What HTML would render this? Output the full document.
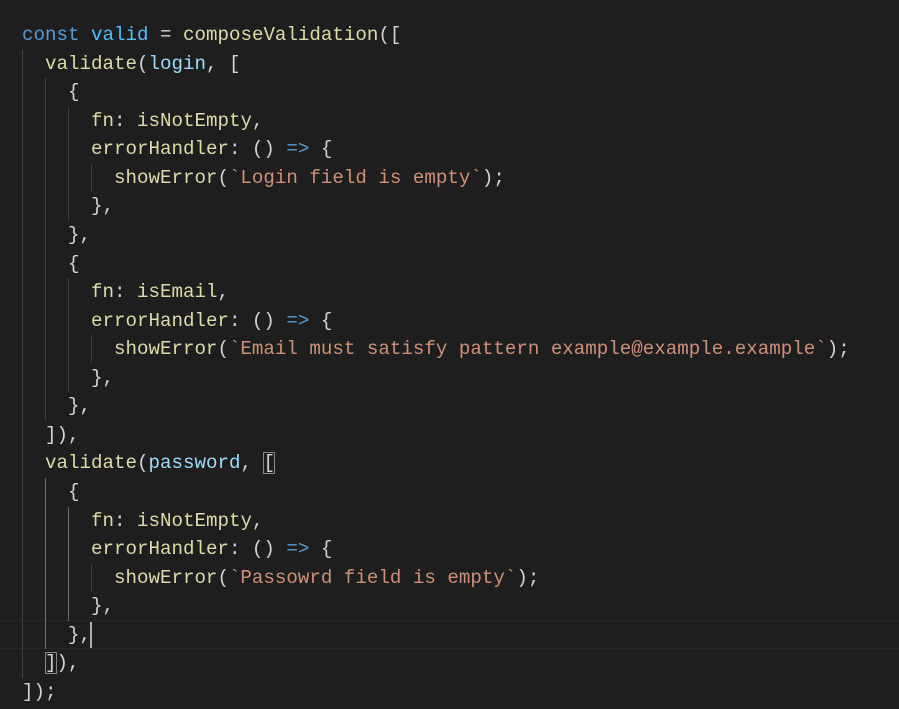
<!DOCTYPE html>
<html><head><meta charset="utf-8"><style>
html,body{margin:0;padding:0;background:#1e1e1e;width:899px;height:709px;overflow:hidden}
pre{position:absolute;left:22px;top:21px;margin:0;font-family:"Liberation Mono",monospace;font-size:19.17px;line-height:28.56px;color:#d4d4d4;}
.k{color:#569cd6}.c{color:#4fc1ff}.f{color:#dcdcaa}.v{color:#9cdcfe}.s{color:#ce9178}
.g{position:absolute;width:1px;background:#404040}
.ga{background:#707070}
.hl{position:absolute;left:0;width:899px;top:620px;height:27px;border-top:1px solid #282828;border-bottom:1px solid #282828}
.bm{outline:1px solid #888;outline-offset:-1px}
.cur{position:absolute;left:90px;top:622px;width:2px;height:26px;background:#aeafad}
</style></head><body>
<div class="hl"></div>
<div class="g" style="left:22px;top:50px;height:628px"></div>
<div class="g" style="left:45px;top:78px;height:343px"></div>
<div class="g ga" style="left:45px;top:478px;height:171px"></div>
<div class="g" style="left:68px;top:107px;height:114px"></div>
<div class="g" style="left:68px;top:278px;height:114px"></div>
<div class="g ga" style="left:68px;top:507px;height:114px"></div>
<div class="g" style="left:91px;top:164px;height:28px"></div>
<div class="g" style="left:91px;top:335px;height:28px"></div>
<div class="g" style="left:91px;top:564px;height:28px"></div>
<pre><span class="k">const</span> <span class="c">valid</span> = <span class="f">composeValidation</span>([
  <span class="f">validate</span>(<span class="v">login</span>, [
    {
      <span class="f">fn</span>: <span class="f">isNotEmpty</span>,
      <span class="f">errorHandler</span>: () <span class="k">=&gt;</span> {
        <span class="f">showError</span>(<span class="s">`Login field is empty`</span>);
      },
    },
    {
      <span class="f">fn</span>: <span class="f">isEmail</span>,
      <span class="f">errorHandler</span>: () <span class="k">=&gt;</span> {
        <span class="f">showError</span>(<span class="s">`Email must satisfy pattern example@example.example`</span>);
      },
    },
  ]),
  <span class="f">validate</span>(<span class="v">password</span>, <span class="bm">[</span>
    {
      <span class="f">fn</span>: <span class="f">isNotEmpty</span>,
      <span class="f">errorHandler</span>: () <span class="k">=&gt;</span> {
        <span class="f">showError</span>(<span class="s">`Passowrd field is empty`</span>);
      },
    },
  <span class="bm">]</span>),
]);</pre>
<div class="cur"></div>
</body></html>
